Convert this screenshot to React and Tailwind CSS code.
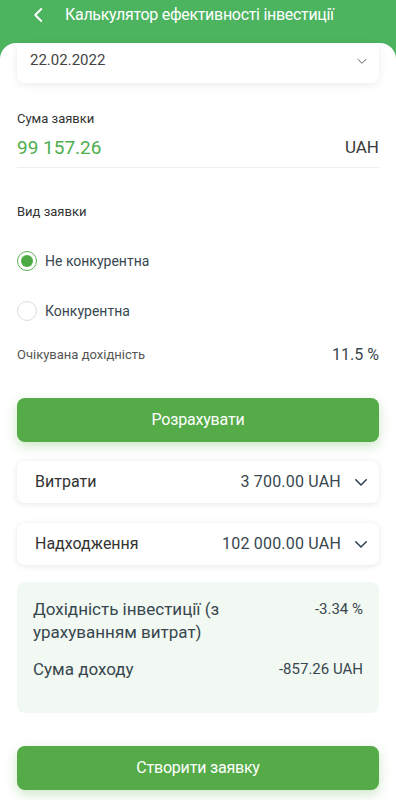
import React from "react";

function Chevron({ className, sw = 2 }) {
  return (
    <svg viewBox="0 0 24 24" className={className} fill="none" stroke="currentColor" strokeWidth={sw} strokeLinecap="round" strokeLinejoin="round">
      <path d="M5 9l7 7 7-7" />
    </svg>
  );
}

export default function App() {
  return (
    <div className="w-[396px] h-[800px] overflow-hidden bg-[#4cb35f] font-['Roboto','Liberation_Sans',sans-serif]">
      <div className="h-[43px] flex items-start pt-[4px]">
        <div className="flex items-center h-[22px] pl-[30px]">
          <svg viewBox="0 0 24 24" className="w-[18px] h-[18px] text-white" fill="none" stroke="currentColor" strokeWidth="2.6" strokeLinecap="round" strokeLinejoin="round">
            <path d="M15 4l-8 8 8 8" />
          </svg>
          <span className="ml-[17px] text-white text-[16px] leading-[20px] tracking-[-0.3px]">Калькулятор ефективності інвестиції</span>
        </div>
      </div>
      <div className="bg-white rounded-t-[16px] h-[757px] px-[17px]">
        <div className="h-[40px] bg-white rounded-b-[8px] shadow-[0_2px_8px_rgba(0,0,0,0.08)] flex items-start justify-between pt-[7px] pl-[13px] pr-[10px]">
          <span className="text-[15px] leading-[20px] text-[#444]">22.02.2022</span>
          <Chevron className="w-[14px] h-[14px] mt-[4px] text-[#555]" sw={1.6} />
        </div>
        <div className="mt-[28px] text-[13px] text-[#333] leading-[16px]">Сума заявки</div>
        <div className="mt-[9px] flex items-center justify-between h-[24px]">
          <span className="text-[19px] text-[#4eae4e]">99 157.26</span>
          <span className="text-[17px] text-[#3a3a3a]">UAH</span>
        </div>
        <div className="mt-[7px] h-px bg-[#eeeeee]" />
        <div className="mt-[36px] text-[13px] text-[#333] leading-[16px]">Вид заявки</div>
        <div className="mt-[30px] flex items-center h-[22px]">
          <div className="w-[20px] h-[20px] rounded-full border border-[#5db45a] flex items-center justify-center">
            <div className="w-[12px] h-[12px] rounded-full bg-[#4eaa44]" />
          </div>
          <span className="ml-[8px] text-[14px] text-[#37474f]">Не конкурентна</span>
        </div>
        <div className="mt-[28px] flex items-center h-[22px]">
          <div className="w-[20px] h-[20px] rounded-full border border-[#dddddd]" />
          <span className="ml-[8px] text-[14px] text-[#37474f]">Конкурентна</span>
        </div>
        <div className="mt-[22px] flex items-center justify-between h-[22px]">
          <span className="text-[13px] text-[#555]">Очікувана дохідність</span>
          <span className="text-[16px] text-[#37474f]">11.5 %</span>
        </div>
        <button className="mt-[32px] w-full h-[44px] rounded-[8px] bg-[#55ab47] text-white text-[16px] tracking-[-0.2px] shadow-[0_4px_12px_rgba(85,171,71,0.3)]">Розрахувати</button>
        <div className="mt-[19px] h-[42px] rounded-[8px] bg-white shadow-[0_1px_6px_rgba(0,0,0,0.1)] flex items-center pl-[18px] pr-[9px]">
          <span className="text-[16px] text-[#333] flex-1">Витрати</span>
          <span className="text-[16px] text-[#37474f] tracking-[0.2px]">3 700.00 UAH</span>
          <Chevron className="ml-[11px] w-[18px] h-[18px] text-[#2c3e50]" />
        </div>
        <div className="mt-[20px] h-[42px] rounded-[8px] bg-white shadow-[0_1px_6px_rgba(0,0,0,0.1)] flex items-center pl-[18px] pr-[9px]">
          <span className="text-[16px] text-[#333] flex-1">Надходження</span>
          <span className="text-[16px] text-[#37474f] tracking-[0.2px]">102 000.00 UAH</span>
          <Chevron className="ml-[11px] w-[18px] h-[18px] text-[#2c3e50]" />
        </div>
        <div className="mt-[17px] h-[131px] rounded-[8px] bg-[#f2f8f2] px-[16px] pt-[16px]">
          <div className="flex justify-between items-start">
            <span className="text-[17px] leading-[23px] text-[#37474f] w-[240px]">Дохідність інвестиції (з урахуванням витрат)</span>
            <span className="text-[15px] leading-[23px] text-[#37474f]">-3.34 %</span>
          </div>
          <div className="mt-[14px] flex justify-between items-start">
            <span className="text-[17px] leading-[23px] text-[#37474f]">Сума доходу</span>
            <span className="text-[15px] leading-[23px] text-[#37474f]">-857.26 UAH</span>
          </div>
        </div>
        <button className="mt-[33px] w-full h-[44px] rounded-[8px] bg-[#55ab47] text-white text-[16px] tracking-[-0.2px] shadow-[0_4px_12px_rgba(85,171,71,0.3)]">Створити заявку</button>
      </div>
    </div>
  );
}
